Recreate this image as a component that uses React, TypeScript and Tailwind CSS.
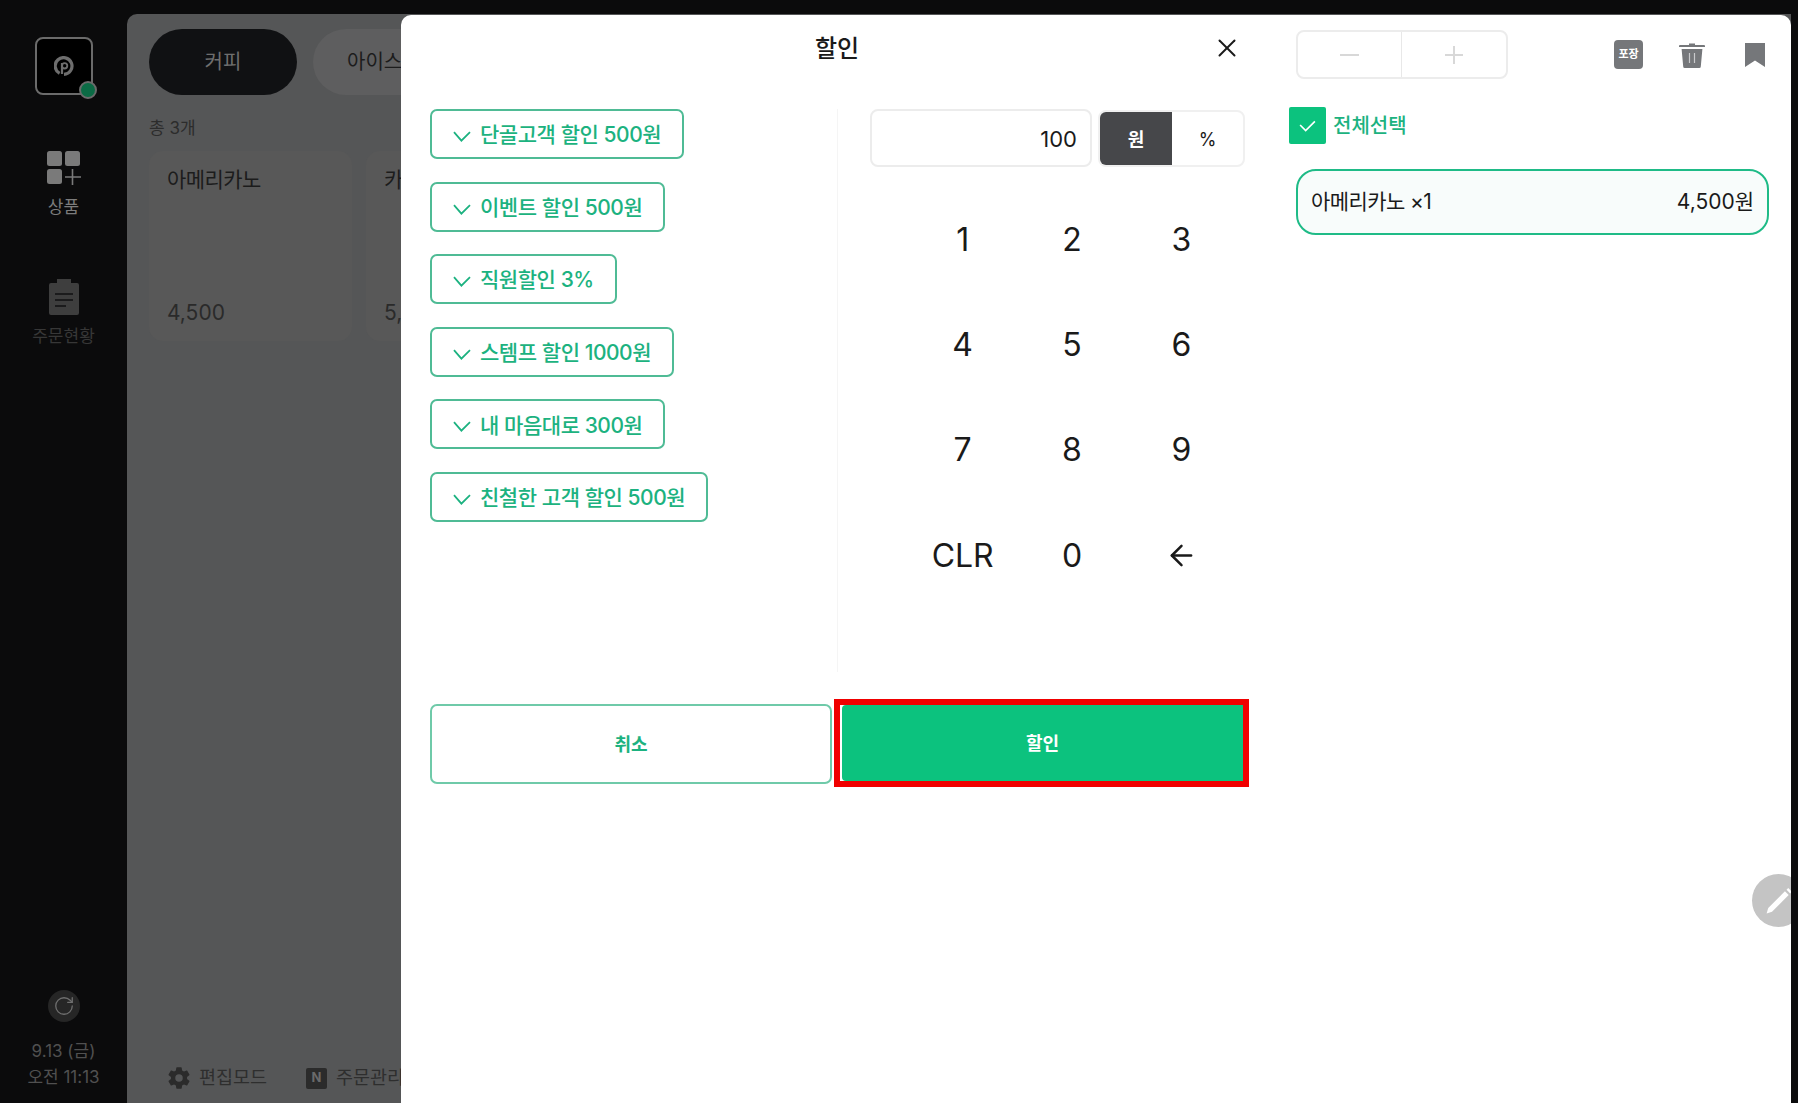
import { ArrowLeft, RotateCw, X } from 'lucide-react';
import { IoSettingsSharp } from 'react-icons/io5';

const discounts = [
  '단골고객 할인 500원',
  '이벤트 할인 500원',
  '직원할인 3%',
  '스템프 할인 1000원',
  '내 마음대로 300원',
  '친철한 고객 할인 500원',
];

const keys = ['1', '2', '3', '4', '5', '6', '7', '8', '9', 'CLR', '0'];

function CheckMark({ className }: { className: string }) {
  return (
    <svg viewBox="0 0 18 11" fill="none" className={className}>
      <path d="M1 1.2 8.4 9.6 17 1.2" stroke="currentColor" strokeWidth="1.8" />
    </svg>
  );
}

function Sidebar() {
  return (
    <aside className="w-[127px] shrink-0 flex flex-col items-center pt-[37px] pb-[13px]">
      <div className="relative w-[58px] h-[58px] rounded-[8px] border-2 border-[#6b6b6b] bg-black flex items-center justify-center">
        <svg viewBox="0 0 20 20" className="w-[20px] h-[20px]" fill="none">
          <path d="M5.6 17.4A8.4 8.4 0 1 1 10 18.4" stroke="#6e6e6e" strokeWidth="3.2" />
          <path d="M8 7v11" stroke="#6e6e6e" strokeWidth="2.2" />
          <circle cx="10.6" cy="9.8" r="2.7" stroke="#6e6e6e" strokeWidth="1.8" />
        </svg>
        <span className="absolute -right-[6px] -bottom-[6px] w-[18px] h-[18px] rounded-full bg-[#0b6b45] border-2 border-[#6b6b6b]" />
      </div>

      <svg viewBox="0 0 34 34" className="w-[34px] h-[34px] mt-[56px]">
        <rect x="0" y="0" width="15" height="15" rx="2.5" fill="#7a7a7a" />
        <rect x="18" y="0" width="15" height="15" rx="2.5" fill="#7a7a7a" />
        <rect x="0" y="18" width="15" height="15" rx="2.5" fill="#7a7a7a" />
        <path d="M25.5 18v16M18 26h16" stroke="#7a7a7a" strokeWidth="1.6" />
      </svg>
      <span className="mt-[10px] text-[17px] leading-[24px] text-[#7c7c7c]">상품</span>

      <svg viewBox="0 0 30 36" className="w-[30px] h-[36px] mt-[60px]">
        <path d="M2 4h6V1.5l7 2 7-2V4h6a2 2 0 0 1 2 2v28a2 2 0 0 1-2 2H2a2 2 0 0 1-2-2V6a2 2 0 0 1 2-2Z" fill="#3e3e3e" />
        <path d="M8 0h14v6H8z" fill="#3e3e3e" />
        <path d="M6 15h18M6 21h18M6 27h11" stroke="#111112" strokeWidth="1.5" />
      </svg>
      <span className="mt-[9px] text-[17px] leading-[24px] text-[#373737]">주문현황</span>

      <div className="mt-auto w-[32px] h-[32px] rounded-full bg-[#262626] flex items-center justify-center">
        <RotateCw size={22} strokeWidth={1.4} className="text-[#6f6f6f]" />
      </div>
      <span className="mt-[16px] text-[17px] leading-[26px] text-[#505050]">9.13 (금)</span>
      <span className="text-[17px] leading-[26px] text-[#505050]">오전 11:13</span>
    </aside>
  );
}

function Background() {
  return (
    <main className="flex-1 mt-[14px] mr-[7px] rounded-tl-[10px] bg-[#555657] overflow-hidden flex flex-col pl-[22px] pt-[15px] pb-[11px]">
      <div className="flex gap-[16px]">
        <div className="w-[148px] h-[66px] rounded-full bg-[#101113] text-[#6e6e6e] text-[20px] flex items-center justify-center">
          커피
        </div>
        <div className="w-[148px] h-[66px] rounded-full bg-[#5e5e5f] text-[#1c1c1c] text-[20px] flex items-center pl-[34px]">
          아이스
        </div>
      </div>
      <p className="mt-[21px] text-[17px] leading-[24px] text-[#2c2c2c]">총 3개</p>
      <div className="mt-[11px] flex gap-[14px]">
        <div className="w-[203px] h-[190px] rounded-[14px] bg-[#585858] px-[18px] pt-[14px] pb-[13px] flex flex-col justify-between text-[#1c1c1c]">
          <span className="text-[21px] leading-[30px] tracking-[-0.6px]">아메리카노</span>
          <span className="text-[21px] leading-[30px] text-[#2a2a2a]">4,500</span>
        </div>
        <div className="w-[203px] h-[190px] rounded-[14px] bg-[#585858] px-[18px] pt-[14px] pb-[13px] flex flex-col justify-between text-[#1c1c1c]">
          <span className="text-[21px] leading-[30px] tracking-[-0.6px]">카페라떼</span>
          <span className="text-[21px] leading-[30px] text-[#2a2a2a]">5,000</span>
        </div>
      </div>
      <div className="mt-auto flex items-center pl-[18px] text-[18.5px] text-[#2e2e2e]">
        <IoSettingsSharp size={24} className="text-[#2b2b2b]" />
        <span className="ml-[8px] w-[107px]">편집모드</span>
        <span className="w-[21px] h-[21px] rounded-[2px] bg-[#2b2b2b] text-[#6a6a6a] text-[13px] font-bold flex items-center justify-center">N</span>
        <span className="ml-[9px] whitespace-nowrap">주문관리</span>
      </div>
    </main>
  );
}

function DiscountPanel() {
  return (
    <section className="w-[873px] shrink-0 pl-[29px] flex flex-col">
      <header className="relative h-[66px] pr-[30px] pt-[1px] flex items-center justify-center">
        <h2 className="text-[24px] font-medium text-[#1a1a1a]">할인</h2>
        <X size={30} strokeWidth={1.6} className="absolute right-[32px] top-[18px] text-[#1a1a1a]" />
      </header>

      <div className="mt-[28px] h-[563px] flex">
        <div className="w-[408px] shrink-0 border-r border-[#f5f5f5] flex flex-col items-start gap-[22.6px]">
          {discounts.map((label) => (
            <button
              key={label}
              className="h-[50px] rounded-[7px] border-2 border-[#4fbb95] pl-[21px] pr-[21px] pt-[2px] flex items-center gap-[9px] text-[21px] font-medium tracking-[-0.45px] text-[#1cb280] whitespace-nowrap"
            >
              <CheckMark className="w-[18px] h-[11px] mt-[3px]" />
              {label}
            </button>
          ))}
        </div>

        <div className="pl-[32px] w-[408px]">
          <div className="flex gap-[6px]">
            <div className="w-[222px] h-[58px] rounded-[8px] border-2 border-[#ececec] pr-[13px] pt-[2px] flex items-center justify-end text-[22px] text-[#1a1a1a]">
              100
            </div>
            <div className="w-[147px] h-[57px] mt-[1px] rounded-[8px] border-2 border-[#f0f0f0] overflow-hidden flex">
              <div className="w-[72px] pt-[2px] bg-[#46474a] text-white text-[18px] font-semibold flex items-center justify-center">원</div>
              <div className="flex-1 pt-[2px] text-[#1a1a1a] text-[18px] flex items-center justify-center">%</div>
            </div>
          </div>
          <div className="ml-[38px] mt-[20px] w-[328px] grid grid-cols-3 auto-rows-[105.4px]">
            {keys.map((k) => (
              <div key={k} className="flex items-center justify-center text-[32px] text-[#1a1a1a]">{k}</div>
            ))}
            <div className="flex items-center justify-center text-[#1a1a1a]">
              <ArrowLeft size={33} strokeWidth={1.8} />
            </div>
          </div>
        </div>
      </div>

      <div className="mt-[32px] flex items-start gap-[2px]">
        <button className="w-[402px] h-[80px] rounded-[7px] border-2 border-[#6fcaa9] text-[18px] font-semibold text-[#1cb280]">
          취소
        </button>
        <div className="w-[415px] h-[88px] -mt-[5px] border-[6px] border-[#f00000] pl-[2px]">
          <button className="w-full h-full rounded-l-[4px] bg-[#0cc27e] text-[18px] font-semibold text-white">
            할인
          </button>
        </div>
      </div>
    </section>
  );
}

function OrderPanel() {
  return (
    <section className="flex-1 pl-[22px] pr-[22px] pt-[15px] flex flex-col">
      <div className="flex items-center">
        <div className="w-[212px] h-[49px] rounded-[8px] border-2 border-[#ececec] flex">
          <div className="w-[104px] border-r border-[#e8e8e8] flex items-center justify-center">
            <span className="w-[19px] h-[2px] bg-[#d8d8d8]" />
          </div>
          <div className="flex-1 flex items-center justify-center">
            <svg viewBox="0 0 20 20" className="w-[20px] h-[20px]">
              <path d="M10 1v18M1 10h18" stroke="#d8d8d8" strokeWidth="2" />
            </svg>
          </div>
        </div>
        <div className="ml-[106px] w-[29px] h-[29px] rounded-[4px] bg-[#75777a] text-white text-[11px] font-semibold flex items-center justify-center">
          포장
        </div>
        <svg viewBox="0 0 26 26" className="ml-[36px] w-[26px] h-[26px]">
          <path d="M10 3V1.6h6V3h9a1 1 0 0 1 1 1v1H0V4a1 1 0 0 1 1-1Z" fill="#75777a" />
          <path d="M2.6 7h20.8l-1.6 17.4a1.6 1.6 0 0 1-1.6 1.6H5.8a1.6 1.6 0 0 1-1.6-1.6Z" fill="#75777a" />
          <path d="M10.5 11v10M15.5 11v10" stroke="#c9cacc" strokeWidth="1.2" />
        </svg>
        <svg viewBox="0 0 20 24" className="ml-[40px] w-[20px] h-[24px]">
          <path d="M0 0h20v24l-10-6.5L0 24Z" fill="#75777a" />
        </svg>
      </div>

      <div className="-ml-[7px] mt-[28px] flex items-center gap-[7px]">
        <div className="w-[37px] h-[37px] rounded-[2px] bg-[#0cc27e] flex items-center justify-center text-white">
          <svg viewBox="0 0 18 13" fill="none" className="w-[17px] h-[12px]">
            <path d="M1 5.4 7 11.4 17 1.4" stroke="currentColor" strokeWidth="1.8" />
          </svg>
        </div>
        <span className="pt-[1px] text-[20px] font-medium text-[#1cb280]">전체선택</span>
      </div>

      <div className="mt-[25px] h-[66px] rounded-[20px] border-2 border-[#1fbb87] bg-[#f8fcfb] pl-[13px] pr-[13px] flex items-center justify-between text-[21px] text-[#1a1a1a]">
        <span className="tracking-[-0.6px]">아메리카노 ×1</span>
        <span>4,500원</span>
      </div>
    </section>
  );
}

export default function App() {
  return (
    <div className="relative w-[1798px] h-[1103px] overflow-hidden bg-[#0b0b0c] flex font-['Inter','Noto_Sans_CJK_KR',sans-serif]">
      <Sidebar />
      <Background />

      {/* Discount modal */}
      <div className="absolute left-[401px] top-[15px] w-[1390px] h-[1088px] rounded-t-[10px] bg-white overflow-hidden flex">
        <DiscountPanel />
        <OrderPanel />
        <button className="absolute left-[1351px] top-[859px] w-[53px] h-[53px] rounded-full bg-[#c4c4c4] flex items-center justify-center">
          <svg viewBox="0 0 26 26" className="w-[28px] h-[28px]" fill="none">
            <path d="M1.5 24.5 3 19.5 18.5 4l3.5 3.5L6.5 23Z" fill="white" />
            <path d="M20 2.6l1.6-1.6 3.4 3.4-1.6 1.6Z" fill="white" />
          </svg>
        </button>
      </div>
    </div>
  );
}
